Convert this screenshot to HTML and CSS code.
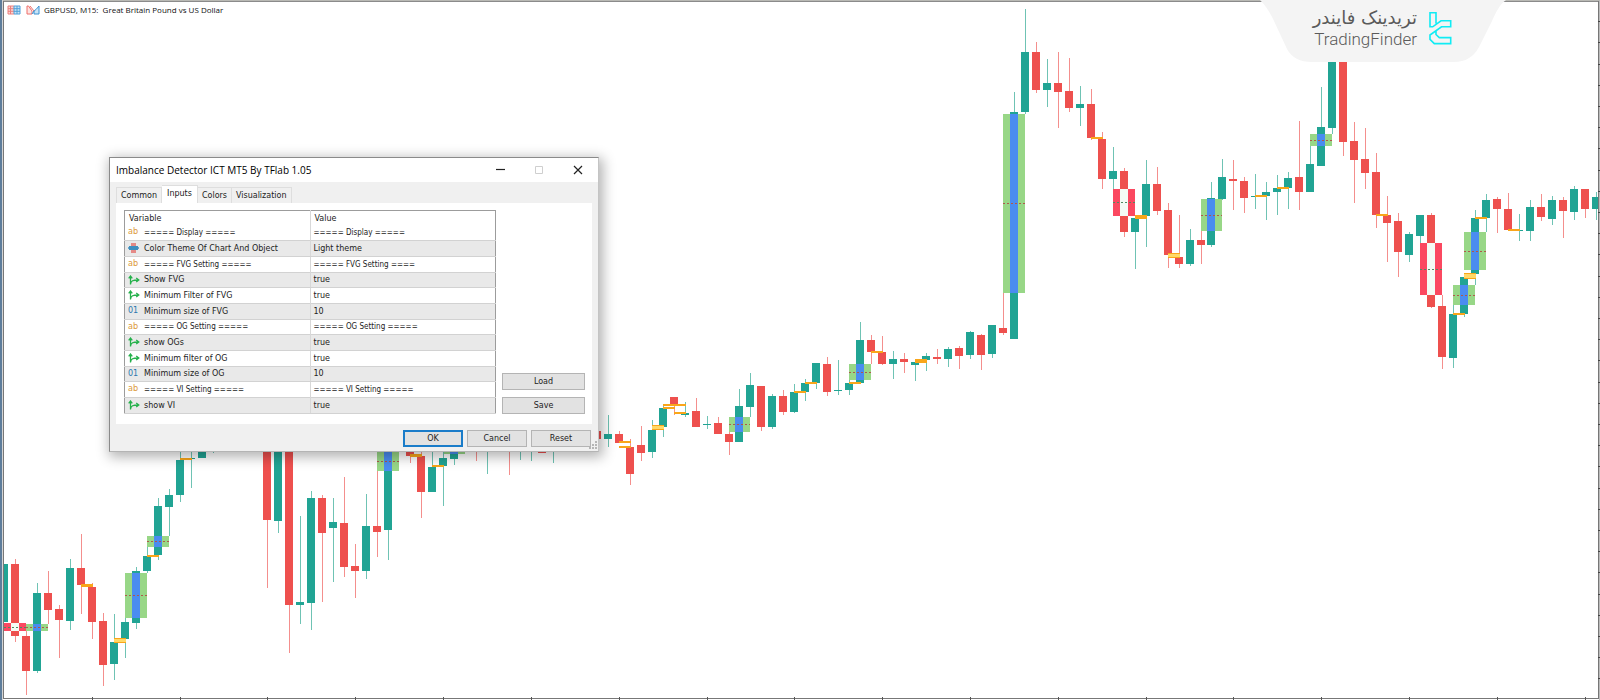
FILE: index.html
```html
<!DOCTYPE html>
<html lang="en">
<head>
<meta charset="utf-8">
<meta name="viewport" content="width=device-width, initial-scale=1">
<title>GBPUSD, M15 - Imbalance Detector</title>
<link rel="stylesheet" href="styles.css">
</head>
<body>
<svg class="defs" aria-hidden="true">
  <symbol id="ic-bool" viewBox="0 0 12 10"><path d="M2.5 9.5V2M0.7 3.3 2.5 1l1.8 2.3M2.5 9.2C3 5.700 5 5 10 5M8.200 3 10.800 5 8.200 7" fill="none" stroke="#25b14b" stroke-width="1.300"/></symbol>
  <symbol id="ic-enum" viewBox="0 0 12 10"><path d="M3 0h5v3H3zM3 7h5v3H3z" fill="#e58a86"/><path d="M1 3h9v1.200h1v1.600h-1V7H1V5.800H0V4.200h1z" fill="#3f8fc0"/></symbol>
</svg>
<main class="workspace">
  <header class="chart-title">
    <svg class="title-icon" viewBox="0 0 14 10" aria-hidden="true"><path d="M7 1H1v8h6M1 3.700h6M1 6.300h6M3.500 1v8" fill="#fbd3d1" stroke="#ee7f7b"/><path d="M7 1h6v8H7zM7 3.700h6M7 6.300h6M10 1v8" fill="#c9e4f6" stroke="#4f9fd8"/></svg>
    <svg class="title-icon" viewBox="0 0 14 10" aria-hidden="true"><path d="M1 1v8h5V6L2.500 1zM4 1l4 5" fill="#fde3e1" stroke="#ee6f6b"/><path d="M13 1v8H8V6l2-1.500L13 1zM8 6 6 9" fill="#c9e4f6" stroke="#3d92d2"/></svg>
    <h1 class="symbol">GBPUSD, M15:&nbsp; Great Britain Pound vs US Dollar</h1>
  </header>

  <svg class="chart" id="chart" viewBox="0 0 1600 700" role="img" aria-label="GBPUSD M15 candlestick chart"></svg>

  <div class="brand">
    <svg class="brand-bg" viewBox="0 0 246 62" preserveAspectRatio="none" aria-hidden="true"><path d="M0 0H246C240 4 236 12 232 21L219 47Q211 62 194 62H52Q34 62 27 49L14 21Q8 8 0 0Z" fill="#f4f4f4"/></svg>
    <div class="brand-text"><span class="brand-fa" lang="fa" dir="rtl">تریدینک فایندر</span><span class="brand-en">TradingFinder</span></div>
    <svg class="brand-logo" viewBox="0 0 24 34" aria-hidden="true"><g fill="none" stroke="#10ecf4" stroke-width="1.600"><path d="M7 12.500V1.800H1V15.800H3.700L12 9.800H21.700V15.800H12.500L1 24V28.300L5.300 32.600H21.700V26.600H10.300L7 23.500V19.700"/></g></svg>
  </div>

  <section class="dialog" role="dialog" aria-labelledby="dlg-title">
    <div class="titlebar">
      <h2 id="dlg-title">Imbalance Detector ICT MT5 By TFlab 1.05</h2>
      <button class="win-btn" aria-label="Minimize"><svg viewBox="0 0 10 10"><path d="M1 4.500h9" stroke="#222" stroke-width="1.200"/></svg></button>
      <button class="win-btn" aria-label="Maximize" disabled><svg viewBox="0 0 10 10"><path d="M1.500 1.500h7v7h-7z" fill="none" stroke="#cfcfcf"/></svg></button>
      <button class="win-btn" aria-label="Close"><svg viewBox="0 0 10 10"><path d="M1 1l8 8M9 1 1 9" stroke="#222" stroke-width="1.200"/></svg></button>
    </div>
    <div class="tabs" role="tablist">
      <button class="tab" role="tab">Common</button><button class="tab active" role="tab" aria-selected="true">Inputs</button><button class="tab" role="tab">Colors</button><button class="tab" role="tab">Visualization</button>
    </div>
    <div class="panel">
      <table class="inputs">
        <thead><tr><th>Variable</th><th>Value</th></tr></thead>
        <tbody>
          <tr class="group"><td><span class="ic ab">ab</span>===== Display =====</td><td>===== Display =====</td></tr>
          <tr><td><svg class="ic"><use href="#ic-enum"/></svg>Color Theme Of Chart And Object</td><td>Light theme</td></tr>
          <tr class="group"><td><span class="ic ab">ab</span>===== FVG Setting =====</td><td>===== FVG Setting ====</td></tr>
          <tr><td><svg class="ic"><use href="#ic-bool"/></svg>Show FVG</td><td>true</td></tr>
          <tr><td><svg class="ic"><use href="#ic-bool"/></svg>Minimum Filter of FVG</td><td>true</td></tr>
          <tr><td><span class="ic num">01</span>Minimum size of FVG</td><td>10</td></tr>
          <tr class="group"><td><span class="ic ab">ab</span>===== OG Setting =====</td><td>===== OG Setting =====</td></tr>
          <tr><td><svg class="ic"><use href="#ic-bool"/></svg>show OGs</td><td>true</td></tr>
          <tr><td><svg class="ic"><use href="#ic-bool"/></svg>Minimum filter of OG</td><td>true</td></tr>
          <tr><td><span class="ic num">01</span>Minimum size of OG</td><td>10</td></tr>
          <tr class="group"><td><span class="ic ab">ab</span>===== VI Setting =====</td><td>===== VI Setting =====</td></tr>
          <tr><td><svg class="ic"><use href="#ic-bool"/></svg>show VI</td><td>true</td></tr>
        </tbody>
      </table>
      <div class="side"><button class="btn">Load</button><button class="btn">Save</button></div>
    </div>
    <footer class="actions"><button class="btn primary">OK</button><button class="btn">Cancel</button><button class="btn">Reset</button></footer>
    <svg class="grip" viewBox="0 0 10 10" aria-hidden="true"><path d="M8 1v2M8 4v2M8 7v2M5 4v2M5 7v2M2 7v2" stroke="#b5b5b5" stroke-width="2"/></svg>
  </section>
</main>
<script src="chart.js"></script>
</body>
</html>
```
FILE: styles.css
```css
* { box-sizing: border-box; }

body {
  margin: 0;
  background: #fff;
  color: #222;
  font-family: "Open Sans", "Noto Sans", sans-serif;
  font-size: 8px;
  line-height: 12px;
}

button { font: inherit; color: inherit; padding: 0; margin: 0; }
h1, h2 { margin: 0; font-weight: 400; }
.defs { display: none; }

.workspace {
  position: relative;
  min-height: 100vh;
  overflow: hidden;
}

.chart { display: block; width: 100%; height: auto; }

.chart-title {
  position: absolute;
  top: 3px;
  left: 7px;
  display: flex;
  align-items: center;
  gap: 4px;
}
.title-icon { width: 14px; height: 10px; }
.title-icon + .title-icon { margin-left: 1px; }
.symbol { font-size: 8px; line-height: 13px; color: #111; }

.brand {
  position: absolute;
  top: 0;
  right: 94px;
  width: 246px;
  height: 62px;
  display: flex;
  justify-content: flex-end;
  gap: 12px;
  padding: 8px 53px 0 0;
}
.brand-bg { position: absolute; inset: 0; width: 100%; height: 100%; }
.brand-text {
  position: relative;
  display: flex;
  flex-direction: column;
  align-items: flex-end;
  color: #5a5a5a;
}
.brand-fa { font: 18px/20px "DejaVu Sans", sans-serif; }
.brand-en { font: 300 17px/22px Roboto, sans-serif; }
.brand-logo { position: relative; width: 24px; height: 34px; margin-top: 3px; }

.dialog {
  position: absolute;
  top: 157px;
  left: 109px;
  width: 490px;
  background: #f0f0f0;
  border: 1px solid #8a8a8a;
  border-right-color: #c4c4c4;
  border-bottom-color: #b4b4b4;
  box-shadow: 2px 3px 12px 2px rgba(0, 0, 0, 0.3);
  font-family: "DejaVu Sans", sans-serif;
}

.titlebar {
  display: flex;
  align-items: center;
  height: 24px;
  padding: 0 1px 0 6px;
  background: #fff;
}
.titlebar h2 {
  flex: 1;
  font-family: "Open Sans", "Noto Sans", sans-serif;
  font-size: 10px;
  color: #000;
}
.win-btn {
  display: flex;
  align-items: center;
  justify-content: center;
  width: 39px;
  height: 24px;
  border: 0;
  background: none;
}
.win-btn svg { width: 10px; height: 10px; }

.tabs { display: flex; align-items: flex-end; height: 21px; padding: 0 6px; }
.tab {
  height: 16px;
  padding: 1px 4px 0;
  border: 1px solid #dedede;
  border-bottom: 0;
  background: #f0f0f0;
}
.tab + .tab { border-left: 0; }
.tab.active { height: 18px; padding: 0 5px 1px; background: #fff; }

.panel {
  display: flex;
  gap: 6px;
  margin: 0 6px;
  padding: 7px 7px 10px 8px;
  background: #fff;
}

.inputs {
  flex: 1;
  border: 1px solid #9c9c9c;
  border-collapse: collapse;
  table-layout: fixed;
}
.inputs th, .inputs td {
  width: 50%;
  height: 16px;
  padding: 0 3px 1px;
  text-align: left;
  font-weight: 400;
  line-height: 13px;
  white-space: nowrap;
}
.inputs th { height: 15px; padding: 0 4px; }
.inputs th + th, .inputs td + td { border-left: 1px solid #d8d8d8; }
.inputs tbody tr:nth-child(3n+1) td { height: 15px; }
.inputs tbody tr:nth-child(even) td {
  background: #e9e9e9;
  border-top: 1px solid #d2d2d2;
  border-bottom: 1px solid #d2d2d2;
}
.group { font-family: "DejaVu Sans Condensed", "DejaVu Sans", sans-serif; }
.ic {
  display: inline-block;
  width: 12px;
  height: 10px;
  margin-right: 4px;
  vertical-align: middle;
  line-height: 9px;
}
.ab { color: #dc9a3c; font-size: 9px; }
.num { color: #2b78ad; font-size: 8px; }

.side {
  display: flex;
  flex-direction: column;
  justify-content: flex-end;
  gap: 7px;
  width: 83px;
}
.btn {
  height: 17px;
  border: 1px solid #b4b4b4;
  background: #e2e2e2;
  line-height: 14px;
}
.actions {
  display: flex;
  justify-content: flex-end;
  gap: 4px;
  padding: 6px 7px 4px;
}
.actions .btn { width: 60px; }
.actions .primary { border: 2px solid #1a7cc9; line-height: 12px; }
.grip { position: absolute; right: 0; bottom: 1px; width: 10px; height: 10px; }
```
FILE: chart.js
```javascript
// Candle rows: slot, direction, high, body top, body bottom, low
const candles = `
-1 u 564 564 622 622|0 d 559 564 636 642|1 d 631 636 671 695|2 u 583 593 671 673|3 d 571 593 610 624
4 d 605 609 620 658|5 u 559 568 621 630|6 d 534 568 585 614|7 d 583 587 622 639|8 d 613 621 665 686
9 u 614 642 664 680|10 u 618 622 639 658|11 u 567 571 623 629|12 u 547 556 571 573|13 u 498 506 555 560
14 u 489 495 507 536|15 u 450 460 495 502|16 u 450 458 459 488|17 u 445 445 458 458|18 u 445 448 449 453
23 d 440 440 520 588|24 u 440 440 521 533|25 d 440 440 605 653|26 u 516 602 605 624|27 u 491 498 603 630
28 d 495 498 533 602|29 u 498 522 528 582|30 d 477 523 567 577|31 d 544 566 571 598|32 u 494 526 571 579
33 d 471 526 532 557|34 u 440 440 530 560|36 d 440 448 456 463|37 d 450 456 492 518|38 u 450 467 492 492
39 u 450 458 466 506|40 u 445 448 459 465|42 d 440 441 443 461|43 u 440 441 443 474|45 d 440 441 443 475
46 u 440 441 443 460|47 u 440 441 443 461|48 d 440 445 453 453|49 u 440 441 443 463|53 d 431 431 439 439
54 u 415 434 439 447|55 d 431 434 443 443|56 d 439 447 474 485|57 d 426 445 453 461|58 u 420 430 452 458
59 u 404 408 427 437|60 d 397 397 404 415|61 u 402 413 415 417|62 d 398 411 427 427|63 u 416 424 425 429
64 d 417 423 434 434|65 d 432 434 442 455|66 u 389 406 442 442|67 u 373 385 407 417|68 d 386 386 427 431
69 u 394 396 427 429|70 d 390 396 412 415|71 u 384 392 412 413|72 u 379 383 392 401|73 u 363 363 383 389
74 d 357 364 392 396|75 u 360 390 391 395|76 u 380 383 390 395|77 u 322 340 383 383|78 d 335 340 352 364
79 d 336 352 364 365|80 u 351 359 364 379|81 d 353 359 362 373|82 u 362 362 365 381|83 u 353 356 360 371
84 d 349 357 359 364|85 u 347 349 359 367|86 d 346 348 356 369|87 u 331 332 355 359|88 d 334 335 355 370
89 u 325 325 354 358|90 d 293 328 333 335|91 u 92 112 339 339|92 u 9 52 112 114|93 d 42 52 90 93
94 u 59 83 90 107|95 d 52 83 92 128|96 d 58 91 108 112|97 u 86 104 108 126|98 d 89 104 138 140
99 d 132 139 179 189|100 u 147 171 179 189|101 d 168 171 232 237|102 u 216 218 232 269|103 u 160 184 216 247
104 d 167 184 211 215|105 d 203 210 255 268|106 d 215 257 264 268|107 u 229 240 264 266|108 d 231 240 245 264
109 u 182 198 245 247|110 u 159 177 199 200|111 d 160 179 181 210|112 d 177 181 198 213|113 u 174 196 197 209
114 u 182 192 196 220|115 u 175 188 192 215|116 u 172 178 188 209|117 d 121 177 192 210|118 u 146 164 192 192
119 u 87 127 166 166|120 u 40 40 128 134|121 d 40 40 142 156|122 d 122 141 160 203|123 d 128 159 173 189
124 d 153 172 215 228|125 d 196 215 223 262|126 d 213 221 252 277|127 u 232 234 255 262|128 u 215 215 236 244
129 d 213 215 307 308|130 d 295 306 357 369|131 u 305 314 358 368|132 u 277 277 314 317|133 u 210 218 274 285
134 u 194 200 218 232|135 d 197 199 209 233|136 d 193 209 230 231|137 u 214 230 231 241|138 u 200 207 231 241
139 d 194 207 217 221|140 u 196 200 219 225|141 d 197 200 211 238|142 u 186 189 212 220|143 d 189 189 209 218
144 u 192 197 209 220`.trim().split(/[|\n]/).map(r => r.split(' '));

// Fair value gaps: middle slot, direction, top, bottom
const gaps = [
  [0, 'd', 623, 631], [2, 'u', 624, 631], [11, 'u', 573, 618], [13, 'u', 536, 547],
  [34, 'u', 452, 471], [40, 'u', 446, 454], [66, 'u', 417, 432], [77, 'u', 364, 380],
  [91, 'u', 114, 293], [101, 'd', 189, 216], [109, 'u', 199, 231], [119, 'u', 134, 146],
  [129, 'd', 243, 295], [132, 'u', 285, 305], [133, 'u', 232, 270]
];

// Volume imbalances: first slot, upper line, lower line, slots covered
const marks = [
  [6, 585, 586], [9, 639, 642], [12, 556, 556], [15, 459, 459], [36, 455, 456], [38, 466, 466],
  [55, 442, 442], [55, 447, 447], [58, 426, 429], [59, 405, 405, 2], [59, 408, 408], [60, 413, 413],
  [71, 392, 392], [72, 383, 383], [76, 383, 383], [78, 352, 352], [82, 360, 362], [98, 138, 138],
  [102, 216, 218], [105, 254, 257], [113, 196, 196], [115, 188, 188], [124, 215, 215],
  [131, 314, 314], [132, 274, 278], [133, 218, 218], [136, 230, 230]
];

const slotX = i => Math.round(15 + i * 10.977);
const rect = (x, y, w, h, c) => `<rect x="${x}" y="${y}" width="${w}" height="${h}" fill="${c}"/>`;
let out = '';

for (const [i, dir, top, bottom] of gaps) {
  if (dir === 'u') {
    const x = slotX(i - 1);
    out += rect(x, top, slotX(i + 1) - x, bottom - top, '#98d787');
  }
}
for (const [i, dir, high, top, bottom, low] of candles) {
  const x = slotX(+i), up = dir === 'u';
  out += rect(x, high, 1, low - high, up ? '#6fc3b4' : '#f48f8d');
  out += rect(x - 4, top, 8, Math.max(bottom - top, 1), up ? '#21a494' : '#ee504e');
}
for (const [i, dir, top, bottom] of gaps) {
  const x = slotX(i - 1), w = slotX(i + 1) - x, c = slotX(i);
  if (dir === 'u') {
    out += rect(c - 4, top, 8, bottom - top, '#4a8cf0');
  } else {
    out += rect(x, top, w, bottom - top, '#fb4860') + rect(c - 4, top, 8, bottom - top, '#f4fbf5');
  }
  const mid = Math.floor((top + bottom) / 2) + 0.5;
  out += `<path d="M${x} ${mid}h${w}" stroke="${dir === 'u' ? '#b0584a' : '#4f8a62'}" stroke-dasharray="2 2"/>`;
}
for (const [i, a, b, n = 1] of marks) {
  const x = slotX(i), w = slotX(i + n) - x + 1;
  out += rect(x, a - 1, w, b - a + 2, b - a > 2 ? '#ffd968' : '#f9a61a');
  if (b - a > 2) out += rect(x, a - 1, w, 1, '#f9a61a') + rect(x, b, w, 1, '#f9a61a');
}

// Window frame with the time and price scale ticks
out += rect(0, 0, 1600, 1, '#b9b9b4') + rect(0, 1, 1600, 1, '#8b8b8b');
out += rect(0, 0, 2, 700, '#5e7d9b') + rect(2, 0, 1, 700, '#d5d5d5') + rect(3, 1, 1, 698, '#777');
out += rect(3, 698, 1597, 1, '#777') + rect(1598, 1, 1, 698, '#777') + rect(1599, 0, 1, 700, '#bbb');
for (let i = 7; i < 144; i += 8) out += rect(slotX(i), 697, 1, 3, '#555');
for (let k = 1; k < 33; k++) out += rect(1598, Math.round(k * 21.2), 2, 1, '#444');

document.getElementById('chart').innerHTML = out;
```
